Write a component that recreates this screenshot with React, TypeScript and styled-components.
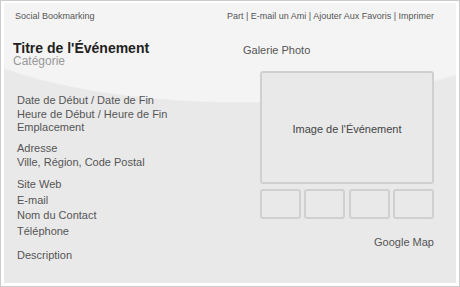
import React from "react";
import styled, { createGlobalStyle } from "styled-components";

const Global = createGlobalStyle`
  html, body { margin: 0; padding: 0; background: #ffffff; }
  body { font-family: "Liberation Sans", Arial, sans-serif; }
`;

const Frame = styled.div`
  box-sizing: border-box;
  width: 460px;
  height: 287px;
  border: 1px solid #cccccc;
  padding: 2px 3px 3px 3px;
  background: #ffffff;
`;

const Card = styled.div`
  box-sizing: border-box;
  height: 100%;
  padding: 0 22px 0 0;
  display: flex;
  flex-direction: column;
  background: radial-gradient(
    ellipse 316px 100px at 236px 0px,
    #f4f4f4 98.6%,
    #e9e9e9 100%
  );
`;

const TopBar = styled.div`
  display: flex;
  justify-content: space-between;
  padding: 7px 0 0 11px;
  font-size: 9px;
  line-height: 12px;
  color: #555555;
  white-space: nowrap;
`;

const Main = styled.div`
  display: grid;
  grid-template-columns: 1fr 191px;
  flex: 1;
`;

const LeftCol = styled.div`
  padding: 18.5px 0 0 9px;
`;

const Title = styled.h1`
  margin: 0;
  font-size: 14px;
  line-height: 14px;
  font-weight: bold;
  color: #222222;
`;

const Category = styled.div`
  font-size: 12px;
  line-height: 12px;
  color: #999999;
`;

const Details = styled.div`
  margin-top: 27.5px;
  padding-left: 4px;
`;

const Group = styled.div<{ $lh: number; $mt: number }>`
  margin-top: ${(p) => p.$mt}px;
  font-size: 11px;
  line-height: ${(p) => p.$lh}px;
  color: #555555;
  white-space: nowrap;
`;

const RightCol = styled.div`
  padding-top: 21.7px;
  display: flex;
  flex-direction: column;
`;

const Label = styled.div<{ $align?: string }>`
  font-size: 11px;
  line-height: 13px;
  color: #555555;
  text-align: ${(p) => p.$align || "left"};
`;

const ImageBox = styled.div`
  box-sizing: border-box;
  margin: 14.3px 0 0 17px;
  padding-top: 3px;
  width: 174px;
  height: 113px;
  border: 2px solid #d0d0d0;
  border-radius: 3px;
  background: #e9e9e9;
  display: flex;
  align-items: center;
  justify-content: center;
  font-size: 11px;
  color: #444444;
`;

const Thumbs = styled.div`
  margin: 5px 0 0 17px;
  width: 174px;
  display: grid;
  grid-template-columns: repeat(4, 1fr);
  gap: 3.3px;
`;

const Thumb = styled.div`
  box-sizing: border-box;
  height: 30px;
  border: 2px solid #d0d0d0;
  border-radius: 3px;
  background: #e9e9e9;
`;

const MapLabel = styled(Label)`
  margin-top: 17.4px;
`;

export default function App() {
  return (
    <>
      <Global />
      <Frame>
        <Card>
          <TopBar>
            <span>Social Bookmarking</span>
            <span>Part | E-mail un Ami | Ajouter Aux Favoris | Imprimer</span>
          </TopBar>
          <Main>
            <LeftCol>
              <Title>Titre de l'Événement</Title>
              <Category>Catégorie</Category>
              <Details>
                <Group $lh={13.5} $mt={0}>
                  <div>Date de Début / Date de Fin</div>
                  <div>Heure de Début / Heure de Fin</div>
                  <div>Emplacement</div>
                </Group>
                <Group $lh={13.5} $mt={7.5}>
                  <div>Adresse</div>
                  <div>Ville, Région, Code Postal</div>
                </Group>
                <Group $lh={15.5} $mt={8.3}>
                  <div>Site Web</div>
                  <div>E-mail</div>
                  <div>Nom du Contact</div>
                  <div>Téléphone</div>
                </Group>
                <Group $lh={13} $mt={9.8}>
                  <div>Description</div>
                </Group>
              </Details>
            </LeftCol>
            <RightCol>
              <Label>Galerie Photo</Label>
              <ImageBox>Image de l'Événement</ImageBox>
              <Thumbs>
                <Thumb />
                <Thumb />
                <Thumb />
                <Thumb />
              </Thumbs>
              <MapLabel $align="right">Google Map</MapLabel>
            </RightCol>
          </Main>
        </Card>
      </Frame>
    </>
  );
}
